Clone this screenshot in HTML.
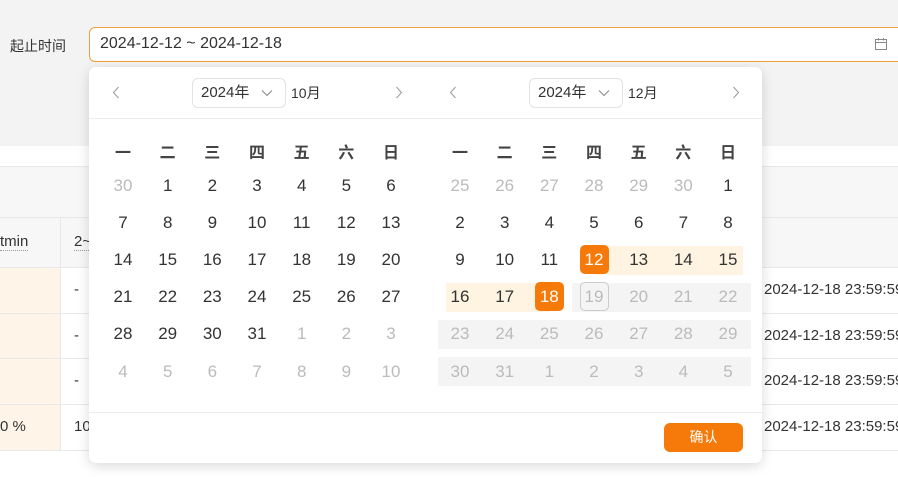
<!DOCTYPE html>
<html><head><meta charset="utf-8"><style>
*{box-sizing:border-box;margin:0;padding:0}
body{width:898px;height:477px;overflow:hidden;background:#fff;font-family:"Liberation Sans","Noto Sans CJK SC",sans-serif;color:#333;position:relative}
.abs{position:absolute}
.c{position:absolute;width:30px;height:28px;line-height:28px;text-align:center;font-size:17px;color:#333}
.g{color:#bbb}
.w{font-weight:bold;color:#444;font-size:16px}
</style></head><body>
<div class="abs" style="left:0;top:0;width:898px;height:146px;background:#f3f3f3"></div>
<div class="abs" style="left:0;top:166px;width:898px;height:101px;background:#f7f7f8;border-top:1px solid #e8e8e8"></div>
<div class="abs" style="left:0;top:267px;width:60px;height:183px;background:#fef5e8"></div>
<div class="abs" style="left:60px;top:217px;width:1px;height:233px;background:#e8e8e8"></div>
<div class="abs" style="left:0;top:217px;width:898px;height:1px;background:#e8e8e8"></div>
<div class="abs" style="left:0;top:267px;width:898px;height:1px;background:#e8e8e8"></div>
<div class="abs" style="left:0;top:313px;width:898px;height:1px;background:#e8e8e8"></div>
<div class="abs" style="left:0;top:358px;width:898px;height:1px;background:#e8e8e8"></div>
<div class="abs" style="left:0;top:404px;width:898px;height:1px;background:#e8e8e8"></div>
<div class="abs" style="left:0;top:450px;width:898px;height:1px;background:#e8e8e8"></div>
<div class="abs" style="left:0;top:233px;font-size:15px;border-bottom:1px dotted #999">tmin</div>
<div class="abs" style="left:74px;top:233px;font-size:15px;border-bottom:1px dotted #999">2~</div>
<div class="abs" style="left:74px;top:281px;font-size:15px">-</div>
<div class="abs" style="left:74px;top:327px;font-size:15px">-</div>
<div class="abs" style="left:74px;top:372px;font-size:15px">-</div>
<div class="abs" style="left:0;top:418px;font-size:15px">0 %</div>
<div class="abs" style="left:74px;top:418px;font-size:15px">10</div>
<div class="abs" style="left:764px;top:281px;font-size:15px;white-space:nowrap">2024-12-18 23:59:59</div>
<div class="abs" style="left:764px;top:327px;font-size:15px;white-space:nowrap">2024-12-18 23:59:59</div>
<div class="abs" style="left:764px;top:372px;font-size:15px;white-space:nowrap">2024-12-18 23:59:59</div>
<div class="abs" style="left:764px;top:418px;font-size:15px;white-space:nowrap">2024-12-18 23:59:59</div>

<div class="abs" style="left:10px;top:36px;font-size:14px;color:#333">起止时间</div>
<div class="abs" style="left:89px;top:27px;width:815px;height:35px;border:1px solid #f0a040;border-radius:6px;background:#fff"></div>
<div class="abs" style="left:100px;top:35px;font-size:16px;color:#333">2024-12-12 ~ 2024-12-18</div>
<svg class="abs" style="left:874px;top:37px" width="14" height="14" viewBox="0 0 14 14"><rect x="1.5" y="2.5" width="11" height="10" fill="none" stroke="#888"/><line x1="1.5" y1="5.5" x2="12.5" y2="5.5" stroke="#888"/><line x1="4.5" y1="1" x2="4.5" y2="3.5" stroke="#888"/><line x1="9.5" y1="1" x2="9.5" y2="3.5" stroke="#888"/></svg>

<div class="abs" style="left:89px;top:67px;width:673px;height:396px;background:#fff;border-radius:7px;box-shadow:0 3px 12px rgba(0,0,0,0.15)"></div>
<div class="abs" style="left:89px;top:118px;width:673px;height:1px;background:#ececec"></div>
<div class="abs" style="left:89px;top:412px;width:673px;height:1px;background:#ececec"></div>
<svg class="abs" style="left:112px;top:86px" width="8" height="13"><path d="M6.5 1L1.5 6.5l5 5.5" fill="none" stroke="#999"/></svg>
<svg class="abs" style="left:395px;top:86px" width="8" height="13"><path d="M1.5 1l5 5.5-5 5.5" fill="none" stroke="#999"/></svg>
<svg class="abs" style="left:449px;top:86px" width="8" height="13"><path d="M6.5 1L1.5 6.5l5 5.5" fill="none" stroke="#999"/></svg>
<svg class="abs" style="left:732px;top:86px" width="8" height="13"><path d="M1.5 1l5 5.5-5 5.5" fill="none" stroke="#999"/></svg>
<div class="abs" style="left:192px;top:78px;width:94px;height:30px;border:1px solid #e3e3e3;border-radius:6px;font-size:15px;line-height:28px;padding-left:8px">2024年<svg class="abs" style="left:68px;top:10px" width="12" height="8"><path d="M1 1.5l5 5 5-5" fill="none" stroke="#888"/></svg></div>
<div class="abs" style="left:291px;top:83px;font-size:14px">10月</div>
<div class="abs" style="left:529px;top:78px;width:94px;height:30px;border:1px solid #e3e3e3;border-radius:6px;font-size:15px;line-height:28px;padding-left:8px">2024年<svg class="abs" style="left:68px;top:10px" width="12" height="8"><path d="M1 1.5l5 5 5-5" fill="none" stroke="#888"/></svg></div>
<div class="abs" style="left:628px;top:83px;font-size:14px">12月</div>

<div class="abs" style="left:594px;top:246px;width:149px;height:29px;background:#fff4e1"></div>
<div class="abs" style="left:446px;top:283px;width:104px;height:29px;background:#fff4e1"></div>
<div class="abs" style="left:572px;top:283px;width:179px;height:29px;background:#f4f4f4"></div>
<div class="abs" style="left:438px;top:320px;width:313px;height:29px;background:#f4f4f4"></div>
<div class="abs" style="left:438px;top:357px;width:313px;height:29px;background:#f4f4f4"></div>
<div class="abs" style="left:580px;top:245px;width:29px;height:29px;background:#f57a0a;border-radius:5px"></div>
<div class="abs" style="left:535px;top:282px;width:29px;height:29px;background:#f57a0a;border-radius:5px"></div>
<div class="abs" style="left:580px;top:282px;width:29px;height:29px;border:1px solid #ccc;border-radius:5px"></div>

<div id="cal"></div>
<div class="abs" style="left:664px;top:423px;width:79px;height:29px;background:#f57a0a;border-radius:6px;color:#fff;font-size:14px;text-align:center;line-height:29px">确认</div>
<script>
var out='';
function p(x0,rows){
 var xs=[0,44.7,89.3,134,178.7,223.3,268];
 var ys=[154,186,223,260,297,334,372];
 rows.forEach(function(r,ri){r.forEach(function(t,ci){
  var cls='c';var txt=t;
  if(ri==0)cls+=' w';
  if(typeof t=='string'&&t[0]=='g'){cls+=' g';txt=t.slice(1);}
  if(typeof t=='string'&&t[0]=='s'){txt=t.slice(1);out+='<div class="'+cls+'" style="color:#fff;left:'+(x0+xs[ci]-15)+'px;top:'+(ys[ri]-14)+'px">'+txt+'</div>';return;}
  out+='<div class="'+cls+'" style="left:'+(x0+xs[ci]-15)+'px;top:'+(ys[ri]-14)+'px">'+txt+'</div>';
 });});
}
var wk=['一','二','三','四','五','六','日'];
p(123,[wk,['g30',1,2,3,4,5,6],[7,8,9,10,11,12,13],[14,15,16,17,18,19,20],[21,22,23,24,25,26,27],[28,29,30,31,'g1','g2','g3'],['g4','g5','g6','g7','g8','g9','g10']]);
p(460,[wk,['g25','g26','g27','g28','g29','g30',1],[2,3,4,5,6,7,8],[9,10,11,'s12',13,14,15],[16,17,'s18','g19','g20','g21','g22'],['g23','g24','g25','g26','g27','g28','g29'],['g30','g31','g1','g2','g3','g4','g5']]);
document.getElementById('cal').innerHTML=out;
</script>
</body></html>
